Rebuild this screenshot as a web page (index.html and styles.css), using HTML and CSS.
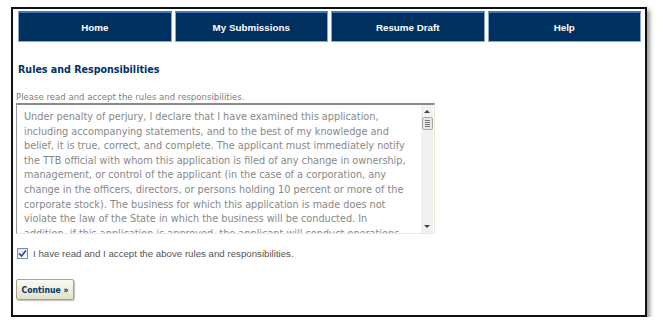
FILE: index.html
```html
<!DOCTYPE html>
<html>
<head>
<meta charset="utf-8">
<link rel="stylesheet" href="styles.css">
</head>
<body>
<div class="frame">
  <nav class="nav">
    <a class="nav-btn">Home</a>
    <a class="nav-btn">My Submissions</a>
    <a class="nav-btn">Resume Draft</a>
    <a class="nav-btn">Help</a>
  </nav>
  <h2 class="title">Rules and Responsibilities</h2>
  <p class="subtitle">Please read and accept the rules and responsibilities.</p>
  <div class="textbox">
    <div class="textbox-text">Under penalty of perjury, I declare that I have examined this application,<br>including accompanying statements, and to the best of my knowledge and<br>belief, it is true, correct, and complete. The applicant must immediately notify<br>the TTB official with whom this application is filed of any change in ownership,<br>management, or control of the applicant (in the case of a corporation, any<br>change in the officers, directors, or persons holding 10 percent or more of the<br>corporate stock). The business for which this application is made does not<br>violate the law of the State in which the business will be conducted. In<br>addition, if this application is approved, the applicant will conduct operations</div>
    <div class="scrollbar">
      <div class="arrow up"></div>
      <div class="thumb"><span></span><span></span><span></span><span></span></div>
      <div class="track"></div>
      <div class="arrow down"></div>
    </div>
  </div>
  <label class="accept">
    <span class="checkbox"><svg width="9" height="9" viewBox="0 0 9 9"><path d="M1 4.5 L3.5 7 L8 1.5" fill="none" stroke="#2a3fa0" stroke-width="1.6"/></svg></span>
    <span class="accept-text">I have read and I accept the above rules and responsibilities.</span>
  </label>
  <button class="continue">Continue &raquo;</button>
</div>
</body>
</html>
```
FILE: styles.css
```css
html, body {
  margin: 0;
  padding: 0;
  background: #fff;
}
.frame {
  box-sizing: border-box;
  margin: 7px 0 0 11px;
  width: 636px;
  height: 310px;
  border: 2px solid #111;
  box-shadow: 3px 3px 4px rgba(0,0,0,0.4);
  padding: 2px 5px 0 5px;
  background: #fff;
}
.nav {
  display: flex;
  gap: 3px;
}
.nav-btn {
  box-sizing: border-box;
  flex: 0 0 153.5px;
  height: 31px;
  background: #00305f;
  border: 1px solid #8aa6c8;
  border-top: 2px solid #3c79bd;
  color: #fff;
  font-family: "Liberation Sans", Arial, sans-serif;
  font-weight: bold;
  font-size: 9.8px;
  display: flex;
  align-items: center;
  justify-content: center;
}
.title {
  margin: 20px 0 0 0;
  font-family: "DejaVu Sans Condensed", "DejaVu Sans", sans-serif;
  font-weight: bold;
  font-size: 10.6px;
  line-height: 14px;
  color: #003366;
}
.subtitle {
  margin: 15px 0 0 -2px;
  font-family: "DejaVu Sans Condensed", "DejaVu Sans", sans-serif;
  font-size: 9.5px;
  line-height: 12px;
  color: #808080;
}
.textbox {
  box-sizing: border-box;
  margin: 0 0 0 -2px;
  width: 419px;
  height: 131px;
  display: flex;
  border-top: 2px solid #8a8a8a;
  border-left: 1px solid #9a9a9a;
  border-right: 1px solid #ece9d8;
  border-bottom: 1px solid #ece9d8;
  background: #fff;
  overflow: hidden;
}
.textbox-text {
  flex: 1;
  padding: 5px 0 0 7px;
  font-family: "DejaVu Sans Condensed", "DejaVu Sans", sans-serif;
  font-size: 10.8px;
  line-height: 14.6px;
  color: #888;
  white-space: nowrap;
  overflow: hidden;
}
.scrollbar {
  flex: 0 0 12px;
  margin-right: 1px;
  background: #f1f1ef;
  display: flex;
  flex-direction: column;
  align-items: center;
}
.arrow {
  width: 0;
  height: 0;
  border-left: 3px solid transparent;
  border-right: 3px solid transparent;
}
.arrow.up {
  margin-top: 5px;
  border-bottom: 3px solid #444;
}
.arrow.down {
  margin-bottom: 5px;
  border-top: 3px solid #444;
}
.thumb {
  box-sizing: border-box;
  margin-top: 4px;
  width: 11px;
  height: 13px;
  background: #e6e6e4;
  border: 1px solid #a8a8a8;
  border-radius: 2px;
  display: flex;
  flex-direction: column;
  justify-content: center;
  align-items: center;
  gap: 1px;
}
.thumb span {
  width: 5px;
  height: 1px;
  background: #777;
}
.track {
  flex: 1;
}
.accept {
  display: flex;
  align-items: center;
  margin: 14px 0 0 -1px;
  gap: 5px;
}
.checkbox {
  box-sizing: border-box;
  width: 11px;
  height: 11px;
  border: 1px solid #7a8ea8;
  background: linear-gradient(135deg, #e0e4ea, #fff);
  display: flex;
  align-items: center;
  justify-content: center;
}
.accept-text {
  font-family: "Liberation Sans", Arial, sans-serif;
  font-size: 9.7px;
  color: #555;
}
.continue {
  display: block;
  box-sizing: border-box;
  margin: 20px 0 0 -2px;
  width: 58px;
  height: 21px;
  padding: 0;
  border: 1px solid #a9a38c;
  border-radius: 2px;
  background: linear-gradient(#fbfaf2, #e6e0c8);
  box-shadow: 1px 1px 1px rgba(0,0,0,0.25);
  font-family: "DejaVu Sans Condensed", "DejaVu Sans", sans-serif;
  font-weight: bold;
  font-size: 8.6px;
  color: #003366;
}
```
